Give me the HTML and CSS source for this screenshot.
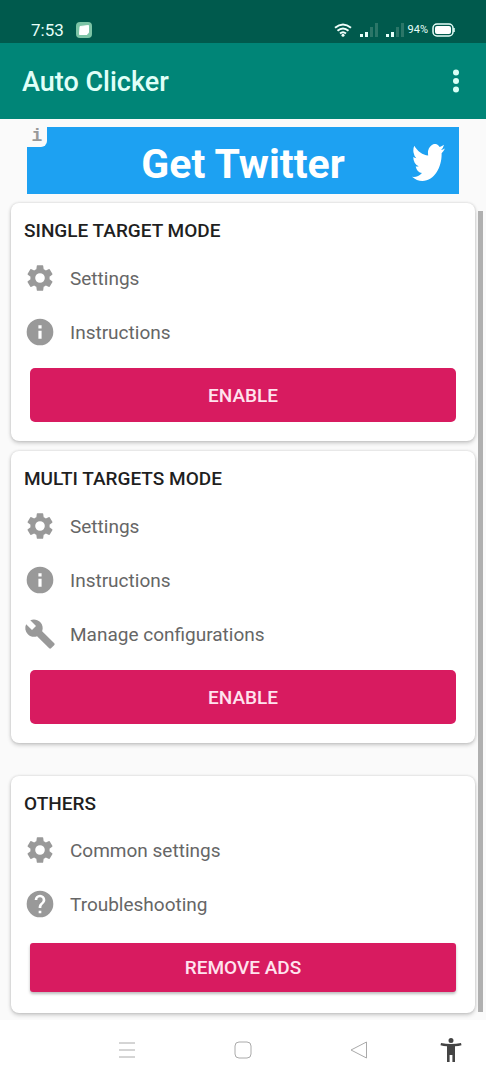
FILE: index.html
```html
<!DOCTYPE html>
<html lang="en">
<head>
<meta charset="utf-8">
<meta name="viewport" content="width=device-width, initial-scale=1">
<title>Auto Clicker</title>
<link rel="stylesheet" href="styles.css">
</head>
<body>
<svg class="sprite" aria-hidden="true">
  <symbol id="gear" viewBox="0 0 24 24"><path d="M19.14 12.94c.04-.3.06-.61.06-.94s-.02-.64-.07-.94l2.03-1.58a.49.49 0 0 0 .12-.61l-1.92-3.32a.49.49 0 0 0-.59-.22l-2.39.96a7 7 0 0 0-1.62-.94L14.4 2.81A.48.48 0 0 0 13.92 2.4h-3.84a.47.47 0 0 0-.47.41l-.36 2.54c-.59.24-1.13.57-1.62.94l-2.39-.96a.48.48 0 0 0-.59.22L2.74 8.87a.47.47 0 0 0 .12.61l2.03 1.58c-.05.3-.09.63-.09.94s.02.64.07.94l-2.03 1.58a.49.49 0 0 0-.12.61l1.92 3.32c.12.22.37.29.59.22l2.39-.96c.5.38 1.03.7 1.62.94l.36 2.54c.05.24.24.41.48.41h3.84c.24 0 .44-.17.47-.41l.36-2.54c.59-.24 1.13-.56 1.62-.94l2.39.96c.22.08.47 0 .59-.22l1.92-3.32a.47.47 0 0 0-.12-.61l-2.02-1.58zM12 15.6a3.6 3.6 0 1 1 0-7.2 3.6 3.6 0 0 1 0 7.2z"/></symbol>
  <symbol id="info" viewBox="0 0 24 24"><path d="M12 2a10 10 0 1 0 0 20 10 10 0 0 0 0-20zm1.200 15h-2.400v-6h2.400v6zm0-7.600h-2.400V7h2.400v2.400z"/></symbol>
  <symbol id="wrench" viewBox="0 0 24 24"><path d="M22.7 19l-9.1-9.1c.9-2.3.4-5-1.5-6.9-2-2-5-2.4-7.4-1.3L9 6 6 9 1.6 4.7C.4 7.1.9 10.1 2.9 12.1c1.9 1.9 4.6 2.4 6.9 1.5l9.1 9.1c.4.4 1 .4 1.4 0l2.3-2.3c.5-.4.5-1.1.1-1.4z"/></symbol>
  <symbol id="help" viewBox="0 0 24 24"><path d="M12 2a10 10 0 1 0 0 20 10 10 0 0 0 0-20zm1 17h-2v-2h2v2zm2.07-7.75-.9.92C13.45 12.9 13 13.5 13 15h-2v-.5c0-1.1.45-2.1 1.17-2.83l1.24-1.26c.37-.36.59-.86.59-1.41a2 2 0 1 0-4 0H8a4 4 0 1 1 8 0c0 .88-.36 1.68-.93 2.25z"/></symbol>
  <symbol id="signal" viewBox="0 0 18 16"><path fill="#e6fff9" d="M0 12h3v3H0zM5 10h3v5H5z"/><path fill="#2b7668" d="M10 5h3v10h-3zM15 1h3v14h-3z"/></symbol>
</svg>

<header>
  <div class="status">
    <span class="clock">7:53</span>
    <svg class="note" viewBox="0 0 16 16"><rect width="16" height="16" rx="4" fill="#7cc4a6"/><path d="M4 4.500l8.500-1v7l-1.500 2H3.500z" fill="#fff" stroke="#fff" stroke-linejoin="round"/></svg>
    <svg class="wifi" viewBox="0 0 18 14"><g fill="none" stroke="#f0fffb" stroke-width="2"><path d="M1 4.800Q9-1.800 17 4.800"/><path d="M3.500 7.800Q9 3.300 14.500 7.800"/><path d="M6 10.500Q9 8 12 10.500"/></g><circle cx="9" cy="12.300" r="1.500" fill="#f0fffb"/></svg>
    <svg class="signal"><use href="#signal"/></svg>
    <svg class="signal"><use href="#signal"/></svg>
    <span class="percent">94%</span>
    <svg class="battery" viewBox="0 0 23 14"><rect x="1" y="1" width="20" height="12" rx="4" fill="none" stroke="#e6fff9" stroke-width="1.500"/><rect x="3" y="3" width="16" height="8" rx="2" fill="#fff"/><path d="M22 5v4" stroke="#e6fff9" stroke-width="1.500"/></svg>
  </div>
  <div class="appbar">
    <h1>Auto Clicker</h1>
    <button class="more" aria-label="More options"><svg viewBox="0 0 6 24"><g fill="#d9fff6"><circle cx="3" cy="3.500" r="3"/><circle cx="3" cy="12" r="3"/><circle cx="3" cy="20.500" r="3"/></g></svg></button>
  </div>
</header>

<main>
  <a class="ad" href="#twitter">
    <span class="ad-info">i</span>
    <span class="ad-text">Get Twitter</span>
    <svg class="bird" viewBox="0 2.200 24 19.600" preserveAspectRatio="none"><path fill="#fff" d="M23.950 4.570a10 10 0 0 1-2.820.770 4.960 4.960 0 0 0 2.160-2.720c-.950.550-2 .950-3.130 1.180a4.920 4.920 0 0 0-8.380 4.480C7.690 8.090 4.070 6.130 1.640 3.160a4.920 4.920 0 0 0 1.520 6.570 4.900 4.900 0 0 1-2.230-.610v.060a4.920 4.920 0 0 0 3.950 4.830 5 5 0 0 1-2.210.080 4.940 4.940 0 0 0 4.600 3.420A9.870 9.870 0 0 1 0 19.540a14 14 0 0 0 7.550 2.210c9.050 0 14-7.500 14-13.980 0-.210 0-.420-.020-.630a9.940 9.940 0 0 0 2.420-2.570z"/></svg>
  </a>

  <section class="card">
    <h2>SINGLE TARGET MODE</h2>
    <a class="row" href="#single-settings"><svg><use href="#gear"/></svg>Settings</a>
    <a class="row" href="#single-instructions"><svg><use href="#info"/></svg>Instructions</a>
    <button class="action">ENABLE</button>
  </section>

  <section class="card">
    <h2>MULTI TARGETS MODE</h2>
    <a class="row" href="#multi-settings"><svg><use href="#gear"/></svg>Settings</a>
    <a class="row" href="#multi-instructions"><svg><use href="#info"/></svg>Instructions</a>
    <a class="row" href="#configurations"><svg><use href="#wrench"/></svg>Manage configurations</a>
    <button class="action">ENABLE</button>
  </section>

  <section class="card others">
    <h2>OTHERS</h2>
    <a class="row" href="#common"><svg><use href="#gear"/></svg>Common settings</a>
    <a class="row" href="#troubleshooting"><svg><use href="#help"/></svg>Troubleshooting</a>
    <button class="action raised">REMOVE ADS</button>
  </section>
  <div class="scrollbar"></div>
</main>

<nav>
  <button aria-label="Recent apps"><svg viewBox="0 0 18 18"><path d="M1 2h16M1 9h16M1 16h16"/></svg></button>
  <button aria-label="Home"><svg viewBox="0 0 18 18"><rect x="1" y="1" width="16" height="16" rx="4"/></svg></button>
  <button aria-label="Back"><svg viewBox="0 0 18 18"><path d="M16.500 1v16L1 9z" stroke-linejoin="round"/></svg></button>
  <button class="access" aria-label="Accessibility"><svg viewBox="0 0 22 24"><path d="M11 0a2.500 2.500 0 1 1 0 5 2.500 2.500 0 0 1 0-5zM1 5q10 2 20 0l.5 2.200q-3 .8-6.500 1.100V24h-2.600v-7H9.600v7H7V8.300Q3.500 8 .5 7.200z"/></svg></button>
</nav>
</body>
</html>
```
FILE: styles.css
```css
* { box-sizing: border-box; }
body {
  margin: 0;
  min-height: 100vh;
  display: flex;
  flex-direction: column;
  background: #fff;
  color: #1f1f1f;
  font-family: Roboto, "Noto Sans", sans-serif;
}
button { border: 0; padding: 0; background: none; font: inherit; cursor: pointer; }
a { color: inherit; text-decoration: none; }
svg { display: block; flex: none; }
.sprite { position: absolute; width: 0; height: 0; }

.status {
  display: flex;
  align-items: center;
  height: 43px;
  padding: 16px 31px 0 31px;
  background: #005a4d;
  color: #e6fff9;
}
.clock { font-size: 17px; }
.note { width: 16px; height: 16px; margin-left: 12px; }
.wifi { width: 18px; height: 14px; margin-left: auto; }
.signal { width: 18px; height: 16px; margin-left: 8px; }
.percent { margin: 0 4px; font-size: 11px; }
.battery { width: 23px; height: 14px; }

.appbar {
  display: flex;
  align-items: center;
  justify-content: space-between;
  height: 76px;
  padding: 0 22px;
  background: #008577;
  color: #e0fff8;
}
h1 { margin: 0; padding-top: 2px; font-size: 27px; font-weight: 500; }
.more { padding: 0 5px; }
.more svg { width: 6px; height: 24px; }

main {
  position: relative;
  flex: 1;
  display: flex;
  flex-direction: column;
  padding: 8px 11px 7px;
  background: #fafafa;
}
.ad {
  position: relative;
  display: flex;
  align-items: center;
  justify-content: center;
  height: 67px;
  margin: 0 16px 9px;
  background: #1da1f2;
  color: #fff;
}
.ad-text {
  padding-top: 6px;
  font-size: 41px;
  font-weight: 700;
}
.ad-info {
  position: absolute;
  top: 0;
  left: 0;
  width: 20px;
  height: 20px;
  border-bottom-right-radius: 6px;
  background: #fafafa;
  color: #999;
  font: bold 18px/18px "Liberation Mono", monospace;
  text-align: center;
}
.bird { position: absolute; top: 17px; right: 14px; width: 33px; height: 37px; }

.card {
  display: flex;
  flex-direction: column;
  margin-bottom: 10px;
  padding: 0 19px 19px 13px;
  border-radius: 8px;
  background: #fff;
  box-shadow: 0 2px 4px #0003, 0 0 3px #0002;
}
h2 { margin: 0; padding-top: 8px; font-size: 19px; line-height: 40px; font-weight: 500; }
.row {
  display: flex;
  align-items: center;
  gap: 14px;
  height: 54px;
  color: #666;
  font-size: 19px;
}
.row svg { width: 32px; height: 32px; fill: #999; }
.action {
  height: 54px;
  margin: 9px 0 0 6px;
  border-radius: 5px;
  background: #d81b60;
  color: #ffe3ee;
  font-size: 19px;
  font-weight: 500;
}
.others { margin: 23px 0 0; padding-bottom: 21px; }
.others h2 { line-height: 39px; }
.raised {
  height: 49px;
  margin-top: 12px;
  border-radius: 3px;
  box-shadow: 0 2px 3px #0004;
}
.scrollbar {
  position: absolute;
  top: 92px;
  right: 3px;
  bottom: 8px;
  width: 5px;
  background: #b0b0b0;
}

nav {
  display: grid;
  grid-template-columns: 1fr 1fr 1fr;
  position: relative;
  height: 60px;
  padding: 0 69px;
  background: #fff;
}
nav button { display: flex; align-items: center; justify-content: center; }
nav svg { width: 18px; height: 18px; fill: none; stroke: #aaa; }
nav .access { position: absolute; top: 0; right: 24px; height: 60px; }
.access svg { width: 22px; height: 26px; fill: #444; stroke: none; }
```
